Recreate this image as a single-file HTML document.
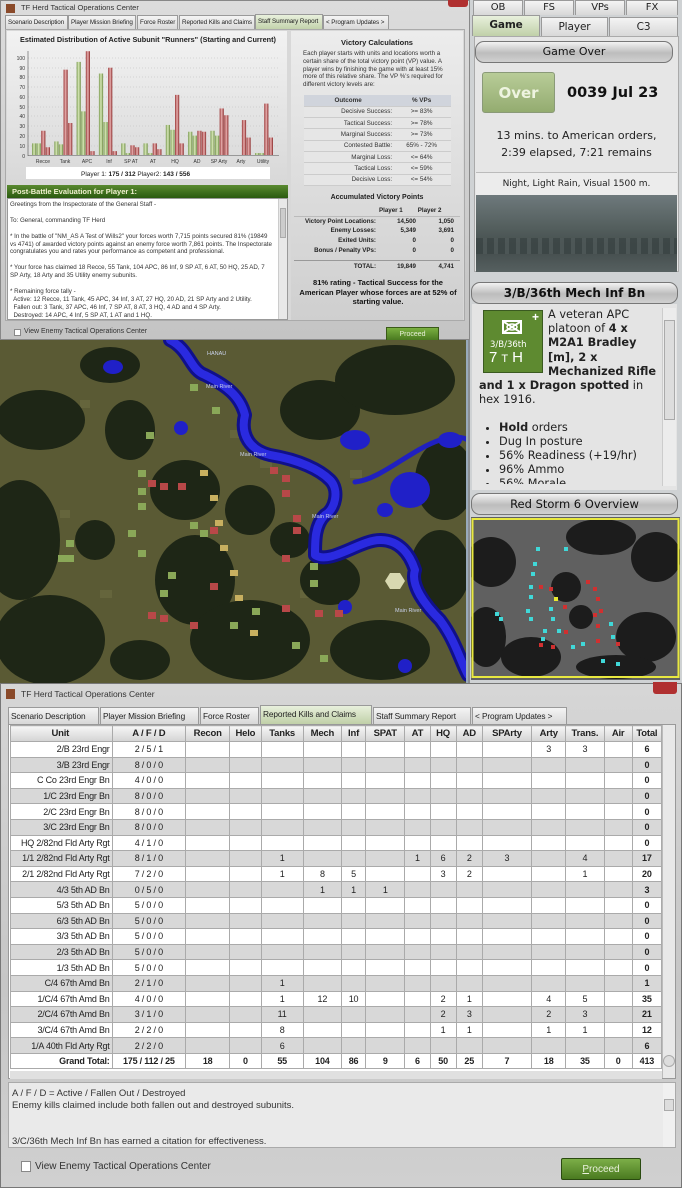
<!DOCTYPE html>
<html><head><meta charset="utf-8"><style>
*{box-sizing:border-box;margin:0;padding:0}
body{width:682px;height:1188px;overflow:hidden;background:#8a8e92;font-family:"Liberation Sans",sans-serif;position:relative}
.abs{position:absolute}
.win{background:linear-gradient(#dcdcdc,#c4c4c4);}
.tab{position:absolute;height:15px;border:1px solid #9a9a9a;border-bottom:none;background:linear-gradient(#f4f4f4,#d8d8d8);font-size:6.3px;line-height:14px;padding:0 2px;color:#222;white-space:nowrap;overflow:hidden;letter-spacing:-0.1px}
.tab.sel{background:linear-gradient(#e8f0dc,#c0d0a8)}
.btab{font-size:8.8px;height:17px;line-height:16px}
.rt{font-family:"DejaVu Sans",sans-serif;font-size:10px;text-align:center}
.hdr{position:absolute;border:1px solid #777;border-radius:9px;background:linear-gradient(#f2f2f2,#bdbdbd 55%,#d0d0d0);text-align:center;color:#111;font-family:"DejaVu Sans",sans-serif}
table{border-collapse:collapse}
#kt td{border:1px solid #aaa;height:15.6px;font-size:9px;text-align:center;color:#222;padding:0;white-space:nowrap;overflow:hidden;letter-spacing:-0.2px}
#kt tr:nth-child(odd) td{background:#d8d8d8}
#kt tr:nth-child(even) td{background:#fff}
#kt td:first-child{text-align:right;padding-right:2px}
#kt td:last-child{font-weight:bold}
#kt tr.h td{background:linear-gradient(#f6f6f6,#d4d4d4);font-weight:bold;text-align:center;height:16px;font-size:9.5px}
#kt tr.g td{background:#fff;font-weight:bold}
.vt td{font-size:6.3px;height:11.3px;color:#333;border-bottom:1px solid #ccc}
</style></head><body>

<!-- TOP WINDOW -->
<div class="abs win" style="left:0;top:0;width:470px;height:340px;border:1px solid #888">
 <div class="abs" style="left:5px;top:3px;width:9px;height:9px;background:#8a4a2a"></div>
 <div class="abs" style="left:20px;top:2px;font-size:7.5px;color:#333">TF Herd Tactical Operations Center</div>
 <div class="abs" style="left:447px;top:-2px;width:20px;height:8px;background:#b03030;border-radius:0 0 3px 3px"></div>
 <div class="tab" style="left:4px;top:14px;width:63px">Scenario Description</div>
 <div class="tab" style="left:67px;top:14px;width:68px">Player Mission Briefing</div>
 <div class="tab" style="left:136px;top:14px;width:41px">Force Roster</div>
 <div class="tab" style="left:178px;top:14px;width:76px">Reported Kills and Claims</div>
 <div class="tab sel" style="left:254px;top:13px;width:68px;height:16px">Staff Summary Report</div>
 <div class="tab" style="left:322px;top:14px;width:66px">&lt; Program Updates &gt;</div>
 <div class="abs" style="left:4px;top:28px;width:460px;height:292px;border:1px solid #aaa;background:#d8d8d8"></div>
 <div class="abs" style="left:6px;top:30px;width:280px;height:152px;background:linear-gradient(#f2f2f2,#d8d8d8)"></div>
 <div class="abs" style="left:19px;top:34px;font-size:7.3px;font-weight:bold;color:#222">Estimated Distribution of Active Subunit "Runners" (Starting and Current)</div>
 <svg class="abs" style="left:0;top:0" width="290" height="180">
  <defs>
   <linearGradient id="gg" x1="0" x2="1"><stop offset="0" stop-color="#7a9a50"/><stop offset=".5" stop-color="#d8e8b8"/><stop offset="1" stop-color="#6a8a40"/></linearGradient>
   <linearGradient id="rg" x1="0" x2="1"><stop offset="0" stop-color="#9a3838"/><stop offset=".5" stop-color="#e8b0b0"/><stop offset="1" stop-color="#8a2828"/></linearGradient>
  </defs>
  <g stroke="#bbb" stroke-dasharray="1,2" stroke-width=".5">
   <line x1="27" x2="278" y1="57" y2="57"/><line x1="27" x2="278" y1="67" y2="67"/><line x1="27" x2="278" y1="76" y2="76"/><line x1="27" x2="278" y1="86" y2="86"/><line x1="27" x2="278" y1="96" y2="96"/><line x1="27" x2="278" y1="106" y2="106"/><line x1="27" x2="278" y1="115" y2="115"/><line x1="27" x2="278" y1="125" y2="125"/><line x1="27" x2="278" y1="135" y2="135"/><line x1="27" x2="278" y1="145" y2="145"/>
  </g>
  <line x1="27" y1="50" x2="27" y2="155" stroke="#555" stroke-width=".6"/>
  <line x1="27" y1="154.5" x2="278" y2="154.5" stroke="#555" stroke-width=".6"/>
  <g font-size="5" fill="#333" text-anchor="end">
   <text x="24" y="59">100</text><text x="24" y="69">90</text><text x="24" y="78">80</text><text x="24" y="88">70</text><text x="24" y="98">60</text><text x="24" y="108">50</text><text x="24" y="117">40</text><text x="24" y="127">30</text><text x="24" y="137">20</text><text x="24" y="147">10</text><text x="24" y="157">0</text>
  </g>
  <g font-size="5" fill="#333" text-anchor="middle">
   <text x="42" y="162">Recce</text><text x="64" y="162">Tank</text><text x="86" y="162">APC</text><text x="108" y="162">Inf</text><text x="130" y="162">SP AT</text><text x="152" y="162">AT</text><text x="174" y="162">HQ</text><text x="196" y="162">AD</text><text x="218" y="162">SP Arty</text><text x="240" y="162">Arty</text><text x="262" y="162">Utility</text>
  </g>
  <g id="bars"></g>
  <rect x="25" y="166" width="244" height="12" fill="#fff"/>
  <text x="80" y="175" font-size="6.5" fill="#222">Player 1:  <tspan font-weight="bold">175 / 312</tspan>    Player2:  <tspan font-weight="bold">143 / 556</tspan></text>
 </svg>
 <div class="abs" style="left:6px;top:184px;width:281px;height:13px;background:linear-gradient(#5a8a30,#2a5a10);color:#f0f0d0;font-size:7.5px;font-weight:bold;line-height:13px;padding-left:5px">Post-Battle Evaluation for Player 1:</div>
 <div class="abs" style="left:6px;top:197px;width:281px;height:122px;background:#fff;border:1px solid #999;font-size:6.2px;color:#333;line-height:7.9px;padding:2px 14px 0 2px;overflow:hidden">
 Greetings from the Inspectorate of the General Staff -<br><br>To: General, commanding TF Herd<br><br>* In the battle of "NM_AS A Test of Wills2" your forces worth 7,715 points secured 81% (19849 vs 4741) of awarded victory points against an enemy force worth 7,861 points.  The Inspectorate congratulates you and rates your performance as competent and professional.<br><br>* Your force has claimed 18 Recce, 55 Tank, 104 APC, 86 Inf, 9 SP AT, 6 AT, 50 HQ, 25 AD, 7 SP Arty, 18 Arty and 35 Utility enemy subunits.<br><br>* Remaining force tally -<br>&nbsp; Active: 12 Recce, 11 Tank, 45 APC, 34 Inf, 3 AT, 27 HQ, 20 AD, 21 SP Arty and 2 Utility.<br>&nbsp; Fallen out: 3 Tank, 37 APC, 46 Inf, 7 SP AT, 8 AT, 3 HQ, 4 AD and 4 SP Arty.<br>&nbsp; Destroyed: 14 APC, 4 Inf, 5 SP AT, 1 AT and 1 HQ.
  <div class="abs" style="right:0;top:0;width:9px;height:120px;background:#e8e8e8;border-left:1px solid #ccc"><div style="margin:9px 1px;height:30px;background:#ccc;border:1px solid #aaa"></div></div>
 </div>
 <div class="abs" style="left:290px;top:30px;width:172px;height:289px;background:linear-gradient(#ececec,#cfcfcf)"></div>
 <div class="abs" style="left:290px;top:37px;width:172px;text-align:center;font-size:7.5px;font-weight:bold;color:#222">Victory Calculations</div>
 <div class="abs" style="left:302px;top:49px;width:150px;font-size:6.2px;color:#333;line-height:7.8px">Each player starts with units and locations worth a certain share of the total victory point (VP) value.  A player wins by finishing the game with at least 15% more of this relative share.  The VP %'s required for different victory levels are:</div>
 <table class="abs vt" style="left:303px;top:94px;width:147px;background:#e6e6e6">
  <tr><td style="background:#d0d4dc;font-weight:bold;text-align:center;width:60%">Outcome</td><td style="background:#d0d4dc;font-weight:bold;text-align:center">% VPs</td></tr>
  <tr><td style="text-align:right">Decisive Success:</td><td style="text-align:center">&gt;= 83%</td></tr>
  <tr><td style="text-align:right">Tactical Success:</td><td style="text-align:center">&gt;= 78%</td></tr>
  <tr><td style="text-align:right">Marginal Success:</td><td style="text-align:center">&gt;= 73%</td></tr>
  <tr><td style="text-align:right">Contested Battle:</td><td style="text-align:center">65% - 72%</td></tr>
  <tr><td style="text-align:right">Marginal Loss:</td><td style="text-align:center">&lt;= 64%</td></tr>
  <tr><td style="text-align:right">Tactical Loss:</td><td style="text-align:center">&lt;= 59%</td></tr>
  <tr><td style="text-align:right">Decisive Loss:</td><td style="text-align:center">&lt;= 54%</td></tr>
 </table>
 <div class="abs" style="left:290px;top:193px;width:172px;text-align:center;font-size:7px;font-weight:bold;color:#222">Accumulated Victory Points</div>
 <div class="abs" style="left:293px;top:205px;width:166px;font-size:6.2px;color:#222;line-height:9.7px">
  <div style="font-weight:bold"><span style="margin-left:85px">Player 1</span><span style="margin-left:15px">Player 2</span></div>
  <div style="border-top:1px solid #bbb"></div>
  <div style="display:grid;grid-template-columns:82px 40px 38px;font-weight:bold">
   <span style="text-align:right">Victory Point Locations:</span><span style="text-align:right">14,500</span><span style="text-align:right">1,050</span>
   <span style="text-align:right">Enemy Losses:</span><span style="text-align:right">5,349</span><span style="text-align:right">3,691</span>
   <span style="text-align:right">Exited Units:</span><span style="text-align:right">0</span><span style="text-align:right">0</span>
   <span style="text-align:right">Bonus / Penalty VPs:</span><span style="text-align:right">0</span><span style="text-align:right">0</span>
  </div>
  <div style="border-top:1px solid #999;margin:4px 0 1px"></div>
  <div style="display:grid;grid-template-columns:82px 40px 38px;font-weight:bold"><span style="text-align:right">TOTAL:</span><span style="text-align:right">19,849</span><span style="text-align:right">4,741</span></div>
 </div>
 <div class="abs" style="left:296px;top:277px;width:162px;text-align:center;font-size:7.5px;font-weight:bold;color:#111;line-height:9.5px">81% rating - Tactical Success for the American Player whose forces are at 52% of starting value.</div>
 <div class="abs" style="left:13px;top:328px;width:7px;height:7px;background:#fff;border:1px solid #888"></div>
 <div class="abs" style="left:23px;top:327px;font-size:7px;color:#333">View Enemy Tactical Operations Center</div>
 <div class="abs" style="left:385px;top:326px;width:53px;height:14px;background:linear-gradient(#7ab040,#4a7a20);border:1px solid #3a5a18;color:#e8f0d8;font-size:7px;text-align:center;line-height:14px">Proceed</div>
</div>

<!-- MAP -->
<svg class="abs" style="left:0;top:340px" width="468" height="344">
 <rect width="468" height="344" fill="#5a5a34"/>
 <g fill="#6a6a40" opacity=".7"><rect x="30" y="150" width="12" height="8"/><rect x="60" y="170" width="10" height="8"/><rect x="100" y="250" width="12" height="8"/><rect x="260" y="120" width="12" height="8"/><rect x="300" y="250" width="12" height="8"/><rect x="350" y="130" width="12" height="8"/><rect x="80" y="60" width="10" height="8"/><rect x="230" y="90" width="12" height="8"/></g>
 <g fill="#1e2616">
  <ellipse cx="40" cy="80" rx="45" ry="30"/><ellipse cx="20" cy="200" rx="40" ry="60"/><ellipse cx="50" cy="300" rx="55" ry="45"/>
  <ellipse cx="110" cy="25" rx="30" ry="18"/><ellipse cx="130" cy="90" rx="25" ry="30"/><ellipse cx="185" cy="150" rx="35" ry="30"/>
  <ellipse cx="195" cy="240" rx="40" ry="45"/><ellipse cx="250" cy="300" rx="60" ry="40"/><ellipse cx="250" cy="170" rx="25" ry="25"/>
  <ellipse cx="320" cy="70" rx="40" ry="30"/><ellipse cx="395" cy="40" rx="60" ry="35"/><ellipse cx="445" cy="140" rx="30" ry="40"/>
  <ellipse cx="440" cy="230" rx="30" ry="40"/><ellipse cx="330" cy="240" rx="30" ry="25"/><ellipse cx="380" cy="310" rx="50" ry="30"/>
  <ellipse cx="95" cy="200" rx="20" ry="20"/><ellipse cx="140" cy="320" rx="30" ry="20"/><ellipse cx="290" cy="200" rx="20" ry="18"/>
 </g>
 <g fill="none" stroke-linecap="round" stroke-linejoin="round">
  <path d="M170 0 C190 10 190 30 205 35 C225 45 240 55 245 75 C240 95 250 110 270 115 C300 120 320 130 330 140 C340 150 335 170 325 175 C315 185 315 200 315 215 C330 225 360 200 380 200 C400 200 410 215 415 230 C410 245 425 265 440 280 C455 300 460 320 468 335" stroke="#10108a" stroke-width="14"/>
  <path d="M170 0 C190 10 190 30 205 35 C225 45 240 55 245 75 C240 95 250 110 270 115 C300 120 320 130 330 140 C340 150 335 170 325 175 C315 185 315 200 315 215 C330 225 360 200 380 200 C400 200 410 215 415 230 C410 245 425 265 440 280 C455 300 460 320 468 335" stroke="#2a2ae0" stroke-width="8"/>
  <path d="M355 142 C380 140 410 110 440 100 C455 95 465 98 468 100" stroke="#2020c0" stroke-width="5"/>
 </g>
 <g fill="#2020c8"><ellipse cx="113" cy="27" rx="10" ry="7"/><circle cx="181" cy="88" r="7"/><ellipse cx="355" cy="100" rx="15" ry="10"/><ellipse cx="410" cy="150" rx="20" ry="18"/><ellipse cx="385" cy="170" rx="8" ry="7"/><circle cx="345" cy="267" r="7"/><circle cx="405" cy="326" r="7"/><ellipse cx="450" cy="100" rx="12" ry="8"/></g>
 <polygon points="390,233 400,233 405,241 400,249 390,249 385,241" fill="#d8d8b0"/>
 <g fill="#8aa858"><rect x="146" y="92" width="8" height="7"/><rect x="138" y="130" width="8" height="7"/><rect x="138" y="148" width="8" height="7"/><rect x="190" y="182" width="8" height="7"/><rect x="200" y="190" width="8" height="7"/><rect x="128" y="190" width="8" height="7"/><rect x="66" y="200" width="8" height="7"/><rect x="66" y="215" width="8" height="7"/><rect x="58" y="215" width="8" height="7"/><rect x="168" y="232" width="8" height="7"/><rect x="160" y="250" width="8" height="7"/><rect x="310" y="223" width="8" height="7"/><rect x="310" y="240" width="8" height="7"/><rect x="252" y="268" width="8" height="7"/><rect x="230" y="282" width="8" height="7"/><rect x="292" y="302" width="8" height="7"/><rect x="320" y="315" width="8" height="7"/><rect x="190" y="44" width="8" height="7"/><rect x="212" y="67" width="8" height="7"/><rect x="138" y="163" width="8" height="7"/><rect x="138" y="210" width="8" height="7"/></g>
 <g fill="#b84848"><rect x="148" y="140" width="8" height="7"/><rect x="160" y="143" width="8" height="7"/><rect x="178" y="143" width="8" height="7"/><rect x="270" y="127" width="8" height="7"/><rect x="282" y="135" width="8" height="7"/><rect x="282" y="150" width="8" height="7"/><rect x="293" y="175" width="8" height="7"/><rect x="293" y="187" width="8" height="7"/><rect x="210" y="187" width="8" height="7"/><rect x="282" y="215" width="8" height="7"/><rect x="210" y="243" width="8" height="7"/><rect x="148" y="272" width="8" height="7"/><rect x="160" y="275" width="8" height="7"/><rect x="190" y="282" width="8" height="7"/><rect x="282" y="265" width="8" height="7"/><rect x="315" y="270" width="8" height="7"/><rect x="335" y="270" width="8" height="7"/></g>
 <g fill="#c8b060"><rect x="200" y="130" width="8" height="6"/><rect x="210" y="155" width="8" height="6"/><rect x="215" y="180" width="8" height="6"/><rect x="220" y="205" width="8" height="6"/><rect x="230" y="230" width="8" height="6"/><rect x="235" y="255" width="8" height="6"/><rect x="250" y="290" width="8" height="6"/></g>
 <g fill="#c8d0e8" font-size="5.5"><text x="206" y="48">Main River</text><text x="240" y="116">Main River</text><text x="312" y="178">Main River</text><text x="395" y="272">Main River</text><text x="207" y="15">HANAU</text></g>
 <rect x="466" y="0" width="2" height="344" fill="#9ab"/>
</svg>

<!-- RIGHT PANEL -->
<div class="abs" style="left:470px;top:0;width:212px;height:683px;background:#cfd2d4"></div>
<div class="tab btab rt" style="left:473px;top:0;width:50px;height:15px;line-height:14px;font-size:10px">OB</div>
<div class="tab btab rt" style="left:524px;top:0;width:50px;height:15px;line-height:14px;font-size:10px">FS</div>
<div class="tab btab rt" style="left:575px;top:0;width:50px;height:15px;line-height:14px;font-size:10px">VPs</div>
<div class="tab btab rt" style="left:626px;top:0;width:52px;height:15px;line-height:14px;font-size:10px">FX</div>
<div class="tab btab sel rt" style="left:472px;top:15px;width:68px;height:21px;line-height:18px;font-weight:bold;font-size:10.5px">Game</div>
<div class="tab btab rt" style="left:541px;top:17px;width:67px;height:19px;line-height:18px;font-size:10.5px">Player</div>
<div class="tab btab rt" style="left:609px;top:17px;width:69px;height:19px;line-height:18px;font-size:10.5px">C3</div>
<div class="abs" style="left:474px;top:36px;width:205px;height:236px;background:#e6e6e6;border:1px solid #aaa"></div>
<div class="hdr" style="left:475px;top:41px;width:198px;height:22px;font-size:11px;line-height:20px">Game Over</div>
<div class="abs" style="left:482px;top:72px;width:73px;height:41px;border-radius:3px;background:linear-gradient(#b8cc98,#94ac70);border:1px solid #8a9a78;color:#eef4e0;font-weight:bold;font-size:15px;text-align:center;line-height:40px;font-family:'DejaVu Sans',sans-serif">Over</div>
<div class="abs" style="left:567px;top:85px;font-family:'DejaVu Sans',sans-serif;font-weight:bold;font-size:14.5px;color:#111">0039 Jul 23</div>
<div class="abs rt" style="left:474px;top:127px;width:205px;font-size:11px;line-height:17px;color:#222">13 mins. to American orders,<br>2:39 elapsed, 7:21 remains</div>
<div class="abs rt" style="left:476px;top:172px;width:201px;height:23px;background:#ececec;border-top:1px solid #bbb;font-size:9px;line-height:22px;color:#222">Night, Light Rain, Visual 1500 m.</div>
<div class="abs" style="left:476px;top:195px;width:201px;height:77px;background:linear-gradient(#6e797c,#55605f 40%,#434c4c 70%,#566060)"></div>
<div class="abs" style="left:476px;top:238px;width:201px;height:16px;background:repeating-linear-gradient(90deg,#3a4444 0 7px,#4e5858 7px 11px);opacity:.8"></div>

<div class="hdr" style="left:471px;top:282px;width:207px;height:22px;font-size:12px;font-weight:bold;line-height:20px">3/B/36th Mech Inf Bn</div>
<div class="abs" style="left:472px;top:304px;width:205px;height:183px;background:#e4e4e4"></div>
<div class="abs" style="left:483px;top:310px;width:60px;height:63px;background:#5e8a30;border:1px solid #3a5a20"></div>
<div class="abs" style="left:502px;top:320px;width:20px;height:14px;border:2px solid #fff;background:#5e8a30">
 <svg width="16" height="10" style="display:block"><path d="M0 0 L16 10 M16 0 L0 10" stroke="#fff" stroke-width="2"/><ellipse cx="8" cy="5" rx="5" ry="3" fill="none" stroke="#fff" stroke-width="1.5"/></svg></div>
<div class="abs" style="left:532px;top:310px;color:#fff;font-weight:bold;font-size:12px">+</div>
<div class="abs" style="left:490px;top:340px;font-size:8.5px;color:#fff;font-family:'DejaVu Sans',sans-serif">3/B/36th</div>
<div class="abs" style="left:489px;top:349px;font-size:15px;color:#fff;letter-spacing:4px">7<span style="font-size:11px">T</span>H</div>
<div class="abs" style="left:479px;top:308px;width:184px;font-family:'DejaVu Sans',sans-serif;font-size:11.3px;line-height:14.2px;color:#222">
 <div style="margin-left:69px;width:116px">A veteran APC platoon of <b>4 x M2A1 Bradley [m], 2 x Mechanized Rifle</b></div>
 <div><b>and 1 x Dragon spotted</b> in hex 1916.</div>
 <ul style="margin:14px 0 0 20px;line-height:14px"><li><b>Hold</b> orders</li><li>Dug In posture</li><li>56% Readiness (+19/hr)</li><li>96% Ammo</li><li>56% Morale</li></ul>
</div>
<div class="abs" style="left:472px;top:484px;width:205px;height:6px;background:#e4e4e4"></div>
<div class="abs" style="left:662px;top:308px;width:14px;height:178px;background:#ececec;border-left:1px solid #ccc"><div style="margin:12px 1px;height:100px;background:#ddd;border:1px solid #aaa"></div></div>

<div class="hdr" style="left:471px;top:493px;width:207px;height:22px;font-size:11.5px;line-height:20px">Red Storm 6 Overview</div>
<svg class="abs" style="left:471px;top:517px" width="209" height="163">
 <rect width="209" height="163" fill="#606060"/>
 <g fill="#1c1c1c"><ellipse cx="20" cy="45" rx="25" ry="25"/><ellipse cx="15" cy="120" rx="20" ry="30"/><ellipse cx="60" cy="140" rx="30" ry="20"/><ellipse cx="130" cy="20" rx="35" ry="18"/><ellipse cx="185" cy="40" rx="25" ry="25"/><ellipse cx="175" cy="120" rx="30" ry="25"/><ellipse cx="95" cy="70" rx="15" ry="15"/><ellipse cx="110" cy="100" rx="12" ry="12"/><ellipse cx="145" cy="150" rx="40" ry="12"/></g>
 <g fill="#40d8d8"><rect x="65" y="30" width="4" height="4"/><rect x="62" y="45" width="4" height="4"/><rect x="60" y="55" width="4" height="4"/><rect x="58" y="68" width="4" height="4"/><rect x="58" y="78" width="4" height="4"/><rect x="55" y="92" width="4" height="4"/><rect x="58" y="100" width="4" height="4"/><rect x="24" y="95" width="4" height="4"/><rect x="28" y="100" width="4" height="4"/><rect x="80" y="100" width="4" height="4"/><rect x="86" y="112" width="4" height="4"/><rect x="72" y="112" width="4" height="4"/><rect x="70" y="120" width="4" height="4"/><rect x="110" y="125" width="4" height="4"/><rect x="100" y="128" width="4" height="4"/><rect x="138" y="105" width="4" height="4"/><rect x="140" y="118" width="4" height="4"/><rect x="145" y="145" width="4" height="4"/><rect x="130" y="142" width="4" height="4"/><rect x="93" y="30" width="4" height="4"/><rect x="78" y="90" width="4" height="4"/></g>
 <g fill="#d03030"><rect x="68" y="68" width="4" height="4"/><rect x="78" y="70" width="4" height="4"/><rect x="115" y="63" width="4" height="4"/><rect x="122" y="70" width="4" height="4"/><rect x="125" y="80" width="4" height="4"/><rect x="128" y="92" width="4" height="4"/><rect x="122" y="96" width="4" height="4"/><rect x="125" y="107" width="4" height="4"/><rect x="92" y="88" width="4" height="4"/><rect x="68" y="126" width="4" height="4"/><rect x="80" y="128" width="4" height="4"/><rect x="125" y="122" width="4" height="4"/><rect x="145" y="125" width="4" height="4"/><rect x="93" y="113" width="4" height="4"/></g>
 <rect x="83" y="80" width="4" height="4" fill="#e8e830"/>
 <rect x="1.5" y="2" width="206" height="158" fill="none" stroke="#e8e840" stroke-width="2"/>
</svg>

<!-- BOTTOM WINDOW -->
<div class="abs win" style="left:0;top:683px;width:682px;height:505px;border:1px solid #777;background:linear-gradient(#d6d6d6,#c6c6c6 60%,#d0d0d0)">
 <div class="abs" style="left:5px;top:5px;width:9px;height:10px;background:#8a4a2a"></div>
 <div class="abs" style="left:20px;top:5px;font-size:8.5px;color:#333">TF Herd Tactical Operations Center</div>
 <div class="abs" style="left:652px;top:-2px;width:24px;height:12px;background:#b03030;border-radius:0 0 3px 3px"></div>
 <div class="tab btab" style="left:7px;top:23px;width:91px;font-size:8.3px">Scenario Description</div>
 <div class="tab btab" style="left:99px;top:23px;width:99px;font-size:8.3px">Player Mission Briefing</div>
 <div class="tab btab" style="left:199px;top:23px;width:59px;font-size:8.3px">Force Roster</div>
 <div class="tab btab sel" style="left:259px;top:21px;width:112px;height:19px;font-size:8.3px">Reported Kills and Claims</div>
 <div class="tab btab" style="left:372px;top:23px;width:98px;font-size:8.3px">Staff Summary Report</div>
 <div class="tab btab" style="left:471px;top:23px;width:95px;font-size:8.3px">&lt; Program Updates &gt;</div>
 <div class="abs" style="left:7px;top:40px;width:668px;height:355px;background:#fff;border:1px solid #999"></div>
 <table id="kt" class="abs" style="left:9px;top:41px;width:652px;table-layout:fixed">
  <colgroup><col style="width:101px"><col style="width:73px"><col style="width:44px"><col style="width:31px"><col style="width:42px"><col style="width:38px"><col style="width:24px"><col style="width:39px"><col style="width:25px"><col style="width:26px"><col style="width:26px"><col style="width:49px"><col style="width:34px"><col style="width:38px"><col style="width:28px"><col style="width:29px"></colgroup>
  <tr class="h"><td style="text-align:center">Unit</td><td>A / F / D</td><td>Recon</td><td>Helo</td><td>Tanks</td><td>Mech</td><td>Inf</td><td>SPAT</td><td>AT</td><td>HQ</td><td>AD</td><td>SPArty</td><td>Arty</td><td>Trans.</td><td>Air</td><td>Total</td></tr>
  <tr><td>2/B 23rd Engr</td><td>2 / 5 / 1</td><td></td><td></td><td></td><td></td><td></td><td></td><td></td><td></td><td></td><td></td><td>3</td><td>3</td><td></td><td>6</td></tr>
  <tr><td>3/B 23rd Engr</td><td>8 / 0 / 0</td><td></td><td></td><td></td><td></td><td></td><td></td><td></td><td></td><td></td><td></td><td></td><td></td><td></td><td>0</td></tr>
  <tr><td>C Co 23rd Engr Bn</td><td>4 / 0 / 0</td><td></td><td></td><td></td><td></td><td></td><td></td><td></td><td></td><td></td><td></td><td></td><td></td><td></td><td>0</td></tr>
  <tr><td>1/C 23rd Engr Bn</td><td>8 / 0 / 0</td><td></td><td></td><td></td><td></td><td></td><td></td><td></td><td></td><td></td><td></td><td></td><td></td><td></td><td>0</td></tr>
  <tr><td>2/C 23rd Engr Bn</td><td>8 / 0 / 0</td><td></td><td></td><td></td><td></td><td></td><td></td><td></td><td></td><td></td><td></td><td></td><td></td><td></td><td>0</td></tr>
  <tr><td>3/C 23rd Engr Bn</td><td>8 / 0 / 0</td><td></td><td></td><td></td><td></td><td></td><td></td><td></td><td></td><td></td><td></td><td></td><td></td><td></td><td>0</td></tr>
  <tr><td>HQ 2/82nd Fld Arty Rgt</td><td>4 / 1 / 0</td><td></td><td></td><td></td><td></td><td></td><td></td><td></td><td></td><td></td><td></td><td></td><td></td><td></td><td>0</td></tr>
  <tr><td>1/1 2/82nd Fld Arty Rgt</td><td>8 / 1 / 0</td><td></td><td></td><td>1</td><td></td><td></td><td></td><td>1</td><td>6</td><td>2</td><td>3</td><td></td><td>4</td><td></td><td>17</td></tr>
  <tr><td>2/1 2/82nd Fld Arty Rgt</td><td>7 / 2 / 0</td><td></td><td></td><td>1</td><td>8</td><td>5</td><td></td><td></td><td>3</td><td>2</td><td></td><td></td><td>1</td><td></td><td>20</td></tr>
  <tr><td>4/3 5th AD Bn</td><td>0 / 5 / 0</td><td></td><td></td><td></td><td>1</td><td>1</td><td>1</td><td></td><td></td><td></td><td></td><td></td><td></td><td></td><td>3</td></tr>
  <tr><td>5/3 5th AD Bn</td><td>5 / 0 / 0</td><td></td><td></td><td></td><td></td><td></td><td></td><td></td><td></td><td></td><td></td><td></td><td></td><td></td><td>0</td></tr>
  <tr><td>6/3 5th AD Bn</td><td>5 / 0 / 0</td><td></td><td></td><td></td><td></td><td></td><td></td><td></td><td></td><td></td><td></td><td></td><td></td><td></td><td>0</td></tr>
  <tr><td>3/3 5th AD Bn</td><td>5 / 0 / 0</td><td></td><td></td><td></td><td></td><td></td><td></td><td></td><td></td><td></td><td></td><td></td><td></td><td></td><td>0</td></tr>
  <tr><td>2/3 5th AD Bn</td><td>5 / 0 / 0</td><td></td><td></td><td></td><td></td><td></td><td></td><td></td><td></td><td></td><td></td><td></td><td></td><td></td><td>0</td></tr>
  <tr><td>1/3 5th AD Bn</td><td>5 / 0 / 0</td><td></td><td></td><td></td><td></td><td></td><td></td><td></td><td></td><td></td><td></td><td></td><td></td><td></td><td>0</td></tr>
  <tr><td>C/4 67th Amd Bn</td><td>2 / 1 / 0</td><td></td><td></td><td>1</td><td></td><td></td><td></td><td></td><td></td><td></td><td></td><td></td><td></td><td></td><td>1</td></tr>
  <tr><td>1/C/4 67th Amd Bn</td><td>4 / 0 / 0</td><td></td><td></td><td>1</td><td>12</td><td>10</td><td></td><td></td><td>2</td><td>1</td><td></td><td>4</td><td>5</td><td></td><td>35</td></tr>
  <tr><td>2/C/4 67th Amd Bn</td><td>3 / 1 / 0</td><td></td><td></td><td>11</td><td></td><td></td><td></td><td></td><td>2</td><td>3</td><td></td><td>2</td><td>3</td><td></td><td>21</td></tr>
  <tr><td>3/C/4 67th Amd Bn</td><td>2 / 2 / 0</td><td></td><td></td><td>8</td><td></td><td></td><td></td><td></td><td>1</td><td>1</td><td></td><td>1</td><td>1</td><td></td><td>12</td></tr>
  <tr><td>1/A 40th Fld Arty Rgt</td><td>2 / 2 / 0</td><td></td><td></td><td>6</td><td></td><td></td><td></td><td></td><td></td><td></td><td></td><td></td><td></td><td></td><td>6</td></tr>
  <tr class="g"><td>Grand Total:</td><td>175 / 112 / 25</td><td>18</td><td>0</td><td>55</td><td>104</td><td>86</td><td>9</td><td>6</td><td>50</td><td>25</td><td>7</td><td>18</td><td>35</td><td>0</td><td>413</td></tr>
 </table>
 <div class="abs" style="left:9px;top:387px;width:652px;height:8px;background:#e0e0e0"></div>
 <div class="abs" style="left:661px;top:41px;width:13px;height:353px;background:#e8e8e8;border-left:1px solid #bbb"><div style="margin:330px 0 0 0;height:12px;border-radius:6px;background:#ddd;border:1px solid #aaa"></div></div>
 <div class="abs" style="left:7px;top:398px;width:668px;height:66px;background:#eaeaea;border:1px solid #aaa;font-size:9.5px;color:#333;line-height:12px;padding:5px 3px">A / F / D = Active / Fallen Out / Destroyed<br>Enemy kills claimed include both fallen out and destroyed subunits.<br><br><br>3/C/36th Mech Inf Bn has earned a citation for effectiveness.
  <div class="abs" style="right:0;top:0;width:12px;height:64px;background:#f0f0f0"><div style="margin:16px 1px;height:12px;background:#ddd;border:1px solid #aaa"></div></div>
 </div>
 <div class="abs" style="left:20px;top:477px;width:10px;height:11px;background:#fff;border:1px solid #888"></div>
 <div class="abs" style="left:34px;top:477px;font-size:10px;color:#333">View Enemy Tactical Operations Center</div>
 <div class="abs" style="left:560px;top:474px;width:80px;height:22px;background:linear-gradient(#7cae48,#4a7a20);border:1px solid #2a4a10;color:#eaf2dc;font-size:10px;text-align:center;line-height:21px;border-radius:2px"><u>P</u>roceed</div>
</div>

<script>
var v=[[12,12,25,8],[14,11,88,33],[96,45,107,4],[84,34,90,4],[12,2,10,8],[12,2,12,6],[31,26,62,12],[24,20,25,24],[25,20,48,41],[0,0,36,18],[2,2,53,18]];
var s='';v.forEach(function(a,i){var x=31+i*22.3;a.forEach(function(val,j){var h=val*0.97;s+='<rect x="'+(x+j*4.6)+'" y="'+(154-h)+'" width="4.2" height="'+h+'" fill="url(#'+(j<2?'gg':'rg')+')"/>';});});
document.getElementById('bars').innerHTML=s;
</script>
</body></html>
